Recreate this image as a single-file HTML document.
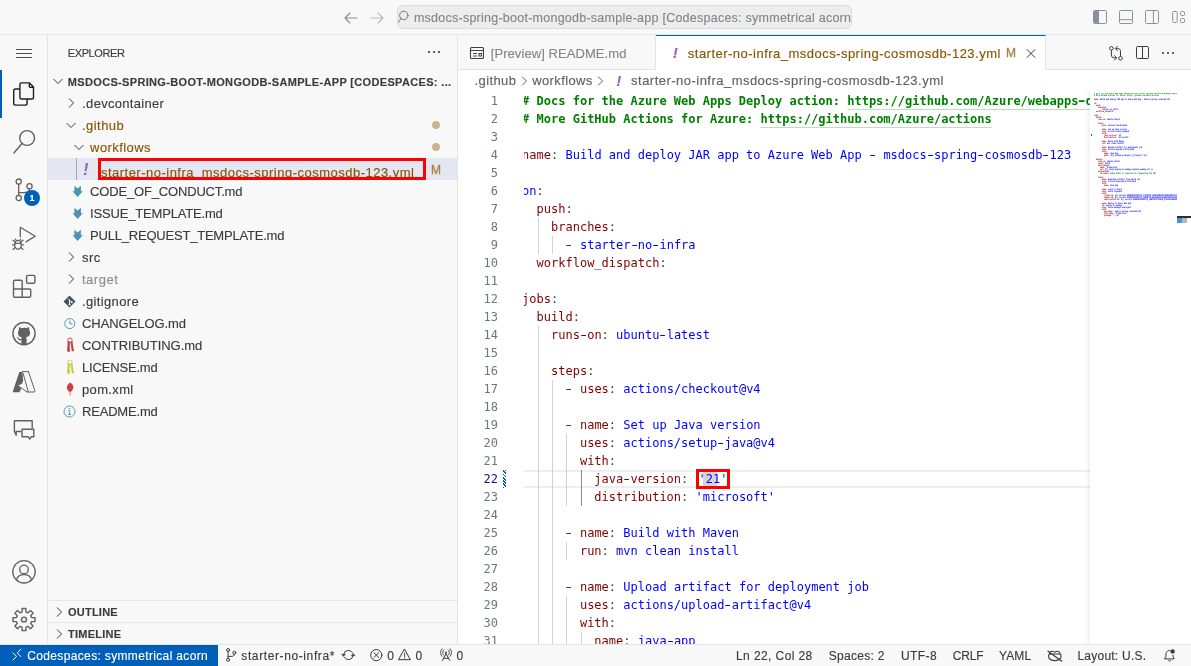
<!DOCTYPE html>
<html lang="en"><head><meta charset="utf-8"><title>starter-no-infra_msdocs-spring-cosmosdb-123.yml</title>
<style>
*{box-sizing:border-box;margin:0;padding:0}
html,body{width:1191px;height:666px;overflow:hidden;background:#f8f8f8}
body{position:relative;font-family:"Liberation Sans",sans-serif;font-size:13px;color:#3b3b3b;-webkit-text-stroke:.14px currentColor}
.abs{position:absolute}
svg{display:block;position:absolute;overflow:visible}
.t{position:absolute;white-space:nowrap;line-height:22px;height:22px}
/* title bar */
#title{position:absolute;left:0;top:0;width:1191px;height:35px;background:#f8f8f8;border-bottom:1px solid #e5e5e5}
#cc{position:absolute;left:397px;top:5px;width:455px;height:24px;background:#ededed;border:1px solid #dcdcdc;border-radius:6px;overflow:hidden}
#cc .t{left:17px;top:1.500px;line-height:21px;height:21px;color:#7f8790;font-size:12.5px}#cctext{display:inline-block}
/* activity bar */
#act{position:absolute;left:0;top:35px;width:48px;height:609px;background:#f8f8f8;border-right:1px solid #e5e5e5}
/* sidebar */
#side{position:absolute;left:48px;top:35px;width:410px;height:609px;background:#f8f8f8;border-right:1px solid #e5e5e5;overflow:hidden}
.row{position:absolute;left:0;width:409px;height:22px}
.row .t{top:1px}
.mod{color:#895503}
.sec{position:absolute;left:0;width:409px;height:22px;border-top:1px solid #e5e5e5}
.sec .t{font-size:11px;font-weight:bold;left:20px;top:0;line-height:22px;color:#3b3b3b}
/* editor */
#ed{position:absolute;left:458px;top:35px;width:733px;height:609px;background:#fff;overflow:hidden}
#tabs{position:absolute;left:0;top:0;width:733px;height:35px;background:#f8f8f8;border-bottom:1px solid #e5e5e5}
.tab{position:absolute;top:0;height:35px;border-right:1px solid #e5e5e5}
.tab .t{top:0;line-height:35px;height:35px}
#bc{position:absolute;left:0;top:35px;width:733px;height:22px;background:#fff;color:#616161}
#bc .t{top:0}
#code{-webkit-text-stroke:0;position:absolute;left:66px;top:57px;width:566px;height:552px;overflow:hidden;font-family:"DejaVu Sans Mono","Liberation Mono",monospace;font-size:12px}
#code .in{position:absolute;left:-1.9px;top:0}
.ln{position:absolute;left:0;height:18px;line-height:18px;white-space:pre;color:#3b3b3b}
.cm{font-weight:bold}
.u,.u .hy{text-decoration:underline;text-decoration-color:#c2dcc2;text-underline-offset:4.300px;text-decoration-thickness:1.200px}
.rb{border:3px solid #ff0000}.hy{display:inline-block;transform:scaleX(1.550)}
#nums{-webkit-text-stroke:0;position:absolute;left:0;top:57px;width:40px;height:552px;overflow:hidden;font-family:"DejaVu Sans Mono","Liberation Mono",monospace;font-size:12px;color:#6e7681}
.num{position:absolute;right:0;height:18px;line-height:18px;text-align:right;white-space:pre}
.num.act{color:#171184}
.g{position:absolute;width:1px;background:#d3d3d3}
.mm{-webkit-text-stroke:0;position:absolute;left:0;top:0;width:83px;height:140px;overflow:hidden;font-family:"DejaVu Sans Mono","Liberation Mono",monospace;font-size:2.300px;font-weight:bold}
.ml{position:absolute;left:0;height:2px;line-height:2px;white-space:pre;transform:scaleX(.7222);transform-origin:0 0}
/* status */
#status{position:absolute;left:0;top:644px;width:1191px;height:22px;background:#f8f8f8;border-top:1px solid #e5e5e5;font-size:12px;color:#3b3b3b}
#status .t{top:0;line-height:22px;font-size:12px}
#remote{position:absolute;left:0;top:0;width:218px;height:21px;background:#005fb8;color:#fff}
#side,#ed,#title,#status,#act{will-change:transform}</style><style id="fit">#s_explorer{letter-spacing:-0.403px;margin-left:-0.2px}#r0{letter-spacing:0.332px;margin-left:-0.2px}#r1{letter-spacing:0.303px;margin-left:0.2px}#r2{letter-spacing:0.45px;margin-left:0.0px}#r3{letter-spacing:0.425px;margin-left:0.1px}#r4{letter-spacing:0.491px;margin-left:-0.6px}#r5{letter-spacing:-0.172px;margin-left:0.1px}#r6{letter-spacing:-0.181px;margin-left:0.1px}#r7{letter-spacing:-0.211px;margin-left:0.1px}#r8{letter-spacing:0.485px;margin-left:0.0px}#r9{letter-spacing:0.508px;margin-left:0.0px}#r10{letter-spacing:0.352px;margin-left:0.0px}#r11{letter-spacing:-0.062px;margin-left:0.0px}#r12{letter-spacing:-0.022px;margin-left:0.0px}#r13{letter-spacing:-0.171px;margin-left:0.0px}#r14{letter-spacing:0.354px;margin-left:0.0px}#r15{letter-spacing:-0.189px;margin-left:0.0px}#s_outline{letter-spacing:0.231px;margin-left:0.0px}#s_timeline{letter-spacing:0.257px;margin-left:0.0px}#cctext{letter-spacing:0.25px;margin-left:-1.1px}#tab1{letter-spacing:0.075px;margin-left:-0.3px}#tab2{letter-spacing:0.48px;margin-left:-0.2px}#bc1{letter-spacing:0.393px;margin-left:0.5px}#bc2{letter-spacing:0.38px;margin-left:0.2px}#bc3{letter-spacing:0.474px;margin-left:0.1px}#st_remote{letter-spacing:0.347px;margin-left:0.3px}#st_branch{letter-spacing:0.607px;margin-left:-0.7px}#st_ln{letter-spacing:0.408px;margin-left:0.0px}#st_sp{letter-spacing:0.281px;margin-left:0.8px}#st_utf{letter-spacing:0.42px;margin-left:0.0px}#st_crlf{letter-spacing:-0.161px;margin-left:-0.2px}#st_yaml{letter-spacing:0.101px;margin-left:0.0px}#st_layout{letter-spacing:0.238px;margin-left:-0.6px}</style></head><body>

<!-- ================= TITLE BAR ================= -->
<div id="title">
  <svg style="left:343px;top:10px" width="16" height="16" viewBox="0 0 16 16" fill="none" stroke="#8b8b8b" stroke-width="1.1" stroke-linecap="round" stroke-linejoin="round"><path d="M14 8H2.5M7 3L2 8l5 5"/></svg>
  <svg style="left:368.500px;top:10px" width="16" height="16" viewBox="0 0 16 16" fill="none" stroke="#b9b9b9" stroke-width="1.1" stroke-linecap="round" stroke-linejoin="round"><path d="M2 8h11.5M9 3l5 5-5 5"/></svg>
  <div id="cc">
    <svg style="left:-1px;top:3px" width="13" height="14" viewBox="0 0 13 14" fill="none" stroke="#737373" stroke-width="1" stroke-linecap="round"><circle cx="6.800" cy="6.400" r="4.200"/><path d="M3.900 9.500L1.400 13.300"/></svg>
    <div class="t" id="ccwrap"><span id="cctext">msdocs-spring-boot-mongodb-sample-app [Codespaces: symmetrical acorn</span><span>]</span></div>
  </div>
  <!-- layout controls -->
  <svg style="left:1093px;top:10px" width="14" height="14" viewBox="0 0 14 14" fill="none" stroke="#8791a0" stroke-width="1"><rect x=".5" y=".5" width="13" height="13" rx="1.200"/><path d="M1 1.500a.5 .5 0 0 1 .5-.5H6v12H1.500a.5 .5 0 0 1-.5-.5z" fill="#8791a0" stroke="none"/></svg>
  <svg style="left:1119px;top:10px" width="14" height="14" viewBox="0 0 14 14" fill="none" stroke="#8791a0" stroke-width="1"><rect x=".5" y=".5" width="13" height="13" rx="1.200"/><path d="M.5 9.700h13"/></svg>
  <svg style="left:1145px;top:10px" width="14" height="14" viewBox="0 0 14 14" fill="none" stroke="#8791a0" stroke-width="1"><rect x=".5" y=".5" width="13" height="13" rx="1.200"/><path d="M8.400 .5v13"/></svg>
  <svg style="left:1172px;top:10px" width="14" height="14" viewBox="0 0 14 14" fill="none" stroke="#8791a0" stroke-width="1"><rect x=".7" y="1.500" width="4.500" height="11" rx="1"/><rect x="8.500" y="1.500" width="4" height="4" rx="1"/><rect x="8.500" y="8.500" width="4" height="4" rx="1"/></svg>
</div>

<!-- ================= ACTIVITY BAR ================= -->
<div id="act">
  <!-- menu -->
  <svg style="left:16px;top:10px" width="16" height="16" viewBox="0 0 16 16" stroke="#4f4f4f" stroke-width="1"><path d="M0 4.500h16M0 8.500h16M0 12.500h16"/></svg>
  <div class="abs" style="left:0;top:35px;width:2px;height:48px;background:#005fb8"></div>
  <!-- files -->
  <svg style="left:12px;top:47px" width="24" height="24" viewBox="0 0 24 24" fill="none" stroke="#1f1f1f" stroke-width="1.400" stroke-linejoin="round"><rect x="1.700" y="7" width="13.400" height="16.100" rx="1.800"/><path fill="#f8f8f8" d="M9.400 .900h8.100l4 4.200V15.500a1.500 1.500 0 0 1-1.500 1.500H9.400a1.500 1.500 0 0 1-1.500-1.500V2.400a1.500 1.500 0 0 1 1.500-1.500z"/><path d="M17.300 1.200v3a1 1 0 0 0 1 1h2.900"/></svg>
  <!-- search -->
  <svg style="left:12px;top:95px" width="24" height="24" viewBox="0 0 24 24" fill="none" stroke="#616161" stroke-width="1.400" stroke-linecap="round"><circle cx="15.100" cy="8" r="7.400"/><path d="M10 13.500L1.900 23"/></svg>
  <!-- scm -->
  <svg style="left:12px;top:143px" width="24" height="24" viewBox="0 0 24 24" fill="none" stroke="#616161" stroke-width="1.300"><circle cx="6.700" cy="3.600" r="2.600"/><circle cx="6.700" cy="20" r="2.600"/><circle cx="17.500" cy="8.200" r="2.600"/><path d="M6.700 6.200v11.200M17.500 10.800c0 3.500-2.500 3.900-6 3.900H6.700"/></svg>
  <div class="abs" style="left:24px;top:155px;width:16px;height:16px;border-radius:8px;background:#005fb8;color:#fff;font-size:9px;font-weight:bold;text-align:center;line-height:16px">1</div>
  <!-- debug -->
  <svg style="left:12px;top:191px" width="24" height="24" viewBox="0 0 24 24" fill="none" stroke="#616161" stroke-width="1.300" stroke-linejoin="round" stroke-linecap="round"><path d="M8.300 10.800V1.300L23.200 10.300l-9.200 5.600"/><ellipse cx="6" cy="18.800" rx="3.300" ry="4.400"/><path d="M2.700 18.800H.500M9.300 18.800h2.200M3.200 16L1 14.300M8.800 16l2.200-1.700M3.200 21.600L1 23.400M8.800 21.600l2.200 1.800M3 17.300h6M4.300 14.800L3.500 13.300M7.700 14.800l.8-1.500"/></svg>
  <!-- extensions -->
  <svg style="left:12px;top:239px" width="24" height="24" viewBox="0 0 24 24" fill="none" stroke="#616161" stroke-width="1.400" stroke-linejoin="round"><path d="M2.700 6.300h6.300a1.200 1.200 0 0 1 1.200 1.200V15h7.300a1.200 1.200 0 0 1 1.200 1.200V22a1.200 1.200 0 0 1-1.200 1.200H2.700A1.200 1.200 0 0 1 1.500 22V7.500a1.200 1.200 0 0 1 1.200-1.200zM1.500 15h8.700M10.200 15v8.200"/><rect x="14.600" y="1.400" width="8.300" height="7.800" rx="1.200"/></svg>
  <!-- github -->
  <svg style="left:12px;top:287px" width="24" height="24" viewBox="0 0 24 24"><circle cx="12" cy="11.600" r="11.100" fill="none" stroke="#616161" stroke-width="1.400"/><path fill="#616161" d="M12 5.900c-.8 0-1.600.1-2.300.3-1.300-.9-2.200-1-2.600-.9-.4 1-.2 1.900 0 2.400-.7.800-1.100 1.800-1.100 3 0 3.300 2 4.300 4 4.700-.3.300-.5.700-.6 1.300-.6.300-2 .6-2.800-.8 0 0-.5-.9-1.500-1 0 0-.9 0-.1.600 0 0 .6.300 1.100 1.400 0 0 .6 1.900 3.300 1.300v3.600c.8.300 1.700.4 2.600.4s1.800-.1 2.600-.4v-4.900c0-.8-.3-1.300-.6-1.600 2.100-.3 4.100-1.200 4.100-4.700 0-1.200-.4-2.100-1.100-2.900.2-.5.500-1.500-.1-2.500-.4-.1-1.300 0-2.600.9-.7-.2-1.500-.3-2.300-.3z"/></svg>
  <!-- azure -->
  <svg style="left:12px;top:335px" width="24" height="24" viewBox="0 0 24 24"><path d="M7.300 2H10.400L11.200 10.400 9.900 14 5.900 15.500 9.200 18.400 7.500 22.200H1.400Q.600 22.200 .900 21.200Z" fill="#616161"/><path d="M10 1.600H16.200M16.400 1.600L22.900 20.800Q23.200 22 22 22H15M11 3L16.200 21.500M5.900 15.500L14.800 21.800" fill="none" stroke="#616161" stroke-width="1" stroke-linecap="round"/></svg>
  <!-- chat -->
  <svg style="left:12px;top:383px" width="24" height="24" viewBox="0 0 24 24" fill="none" stroke="#616161" stroke-width="1.400" stroke-linejoin="round"><path d="M9.300 13.500H4.200v3.800L2.400 13.500V2.700h17.800v7.900"/><path d="M10 11.300h11.800v7.400h-2.500l-1.600 2.300-1.700-2.300H10z"/></svg>
  <!-- account -->
  <svg style="left:12px;top:525px" width="24" height="24" viewBox="0 0 24 24" fill="none" stroke="#616161" stroke-width="1.300"><circle cx="12" cy="11.800" r="11.200"/><circle cx="12" cy="9.400" r="4.300"/><path d="M4.600 20c.6-3.300 3.700-5.300 7.400-5.300s6.800 2 7.400 5.300"/></svg>
  <!-- gear -->
  <svg style="left:12px;top:573px" width="24" height="24" viewBox="0 0 24 24" fill="none" stroke="#616161" stroke-width="1.400" stroke-linejoin="round"><circle cx="12" cy="11.600" r="2.500"/><path d="M9.990 4.060 L10.110 0.560 L13.890 0.560 L14.010 4.060 L15.910 4.850 L18.470 2.450 L21.150 5.130 L18.750 7.690 L19.540 9.590 L23.040 9.710 L23.040 13.490 L19.540 13.610 L18.750 15.510 L21.150 18.070 L18.470 20.750 L15.910 18.350 L14.010 19.140 L13.890 22.640 L10.110 22.640 L9.990 19.140 L8.090 18.350 L5.530 20.750 L2.850 18.070 L5.250 15.510 L4.460 13.610 L0.960 13.490 L0.960 9.710 L4.460 9.590 L5.250 7.690 L2.850 5.130 L5.530 2.450 L8.090 4.850Z"/></svg>
</div>

<!-- ================= SIDEBAR ================= -->
<div id="side">
  <div class="t" style="left:20px;top:7px;font-size:11px;color:#3b3b3b" id="s_explorer">EXPLORER</div>
  <svg style="left:378px;top:9px" width="16" height="16" viewBox="0 0 16 16" fill="#3b3b3b"><circle cx="3" cy="8" r="1.100"/><circle cx="8" cy="8" r="1.100"/><circle cx="13" cy="8" r="1.100"/></svg>
<div class="row" style="top:35px;"><svg style="left:2px;top:3px" width="16" height="16" viewBox="0 0 16 16" fill="none" stroke="#3b3b3b" stroke-width="1"><path d="M3.500 6l4.500 4.500L12.500 6"/></svg><div class="t" id="r0" style="left:20px;font-size:11px;font-weight:bold;color:#3b3b3b">MSDOCS-SPRING-BOOT-MONGODB-SAMPLE-APP [CODESPACES: ...</div></div>
<div class="row" style="top:57px;"><svg style="left:15px;top:3px" width="16" height="16" viewBox="0 0 16 16" fill="none" stroke="#3b3b3b" stroke-width="1"><path d="M6 3.500l4.500 4.500L6 12.500"/></svg><div class="t" id="r1" style="left:34px">.devcontainer</div></div>
<div class="row" style="top:79px;"><svg style="left:15px;top:3px" width="16" height="16" viewBox="0 0 16 16" fill="none" stroke="#3b3b3b" stroke-width="1"><path d="M3.500 6l4.500 4.500L12.500 6"/></svg><div class="t mod" id="r2" style="left:34px">.github</div><div class="abs" style="left:384px;top:7px;width:8px;height:8px;border-radius:4px;background:#c9b48e"></div></div>
<div class="row" style="top:101px;"><svg style="left:23px;top:3px" width="16" height="16" viewBox="0 0 16 16" fill="none" stroke="#3b3b3b" stroke-width="1"><path d="M3.500 6l4.500 4.500L12.500 6"/></svg><div class="t mod" id="r3" style="left:42px">workflows</div><div class="abs" style="left:384px;top:7px;width:8px;height:8px;border-radius:4px;background:#c9b48e"></div></div>
<div class="row" style="top:123px;background:#e4e6f1"><div class="abs" style="left:28px;top:0;width:1px;height:22px;background:#a9a9a9"></div><div class="t" style="left:35.300px;top:1px;color:#9866c2;font-style:italic;font-size:15.600px;font-weight:bold">!</div><div class="abs" style="left:50px;top:0;width:328px;height:22px;border:3px solid #ff0000;overflow:hidden"><div class="t mod" id="r4" style="left:0.500px;top:1px">starter-no-infra_msdocs-spring-cosmosdb-123.yml</div></div><div class="t" id="r4m" style="left:383px;color:#a98547;font-size:12px;-webkit-text-stroke:.35px currentColor">M</div></div>
<div class="row" style="top:145px;"><svg style="left:0;top:0" width="48" height="22" viewBox="0 0 48 22" fill="#4f93b3"><path d="M26.400 5.800L29.500 8.500 32.900 5.800V11.200H34.800L29.600 16.900 24.500 11.200H26.400Z"/></svg><div class="t" id="r5" style="left:42px">CODE_OF_CONDUCT.md</div></div>
<div class="row" style="top:167px;"><svg style="left:0;top:0" width="48" height="22" viewBox="0 0 48 22" fill="#4f93b3"><path d="M26.400 5.800L29.500 8.500 32.900 5.800V11.200H34.800L29.600 16.900 24.500 11.200H26.400Z"/></svg><div class="t" id="r6" style="left:42px">ISSUE_TEMPLATE.md</div></div>
<div class="row" style="top:189px;"><svg style="left:0;top:0" width="48" height="22" viewBox="0 0 48 22" fill="#4f93b3"><path d="M26.400 5.800L29.500 8.500 32.900 5.800V11.200H34.800L29.600 16.900 24.500 11.200H26.400Z"/></svg><div class="t" id="r7" style="left:42px">PULL_REQUEST_TEMPLATE.md</div></div>
<div class="row" style="top:211px;"><svg style="left:15px;top:3px" width="16" height="16" viewBox="0 0 16 16" fill="none" stroke="#3b3b3b" stroke-width="1"><path d="M6 3.500l4.500 4.500L6 12.500"/></svg><div class="t" id="r8" style="left:34px">src</div></div>
<div class="row" style="top:233px;"><svg style="left:15px;top:3px" width="16" height="16" viewBox="0 0 16 16" fill="none" stroke="#3b3b3b" stroke-width="1"><path d="M6 3.500l4.500 4.500L6 12.500"/></svg><div class="t" id="r9" style="left:34px;color:#8e8e90">target</div></div>
<div class="row" style="top:255px;"><svg style="left:15px;top:5px" width="13" height="13" viewBox="0 0 13 13"><path d="M6.500 .500L12.500 6.500 6.500 12.500 .500 6.500z" fill="#41535b"/><path d="M5 3.500l3.500 3.500M6.500 5v5" stroke="#f8f8f8" stroke-width="1" fill="none"/><circle cx="6.500" cy="9.500" r="1" fill="#f8f8f8"/><circle cx="8.800" cy="7.200" r="1" fill="#f8f8f8"/></svg><div class="t" id="r10" style="left:34px">.gitignore</div></div>
<div class="row" style="top:277px;"><svg style="left:15px;top:5px" width="13" height="13" viewBox="0 0 13 13" fill="none" stroke="#519aba" stroke-width="1"><circle cx="6.800" cy="6.600" r="5"/><path d="M6.800 3.800v3h2.600"/></svg><div class="t" id="r11" style="left:34px">CHANGELOG.md</div></div>
<div class="row" style="top:299px;"><svg style="left:0;top:0" width="48" height="22" viewBox="0 0 48 22" fill="#cc3e44"><circle cx="21.900" cy="6.300" r="2.300" fill="none" stroke="#cc3e44" stroke-width=".900"/><path d="M19.700 7.300L22.100 7.600 21.700 12.500 22 17.400 20.400 18 19.100 17 19.400 12zM22.500 7.800L24.500 7.300 25.100 12 26 16.500 25.200 17.600 23.700 17 23.100 12z"/></svg><div class="t" id="r12" style="left:34px">CONTRIBUTING.md</div></div>
<div class="row" style="top:321px;"><svg style="left:0;top:0" width="48" height="22" viewBox="0 0 48 22" fill="#cbcb41"><circle cx="21.900" cy="6.300" r="2.300" fill="none" stroke="#cbcb41" stroke-width=".900"/><path d="M19.700 7.300L22.100 7.600 21.700 12.500 22 17.400 20.400 18 19.100 17 19.400 12zM22.500 7.800L24.500 7.300 25.100 12 26 16.500 25.200 17.600 23.700 17 23.100 12z"/></svg><div class="t" id="r13" style="left:34px">LICENSE.md</div></div>
<div class="row" style="top:343px;"><svg style="left:0;top:0" width="48" height="22" viewBox="0 0 48 22" fill="#cc3e44"><path d="M22.300 4.500C24.500 6 25.600 7.800 25.400 9.500 25.200 11.500 23.800 13.200 22.400 14L22.500 17.200H21.800L21.700 14C20 13 18.800 11.300 18.900 9.300 19 7.600 20.300 5.800 22.300 4.500z"/></svg><div class="t" id="r14" style="left:34px">pom.xml</div></div>
<div class="row" style="top:365px;"><svg style="left:15px;top:5px" width="13" height="13" viewBox="0 0 13 13" fill="none" stroke="#519aba" stroke-width="1"><circle cx="6.500" cy="6.500" r="5.500"/><path d="M5.300 5.500h1.400v4M5 9.500h3" /><circle cx="6.400" cy="3.600" r=".700" fill="#519aba" stroke="none"/></svg><div class="t" id="r15" style="left:34px">README.md</div></div>
  <div class="sec" style="top:565px"><svg style="left:2.500px;top:3px" width="16" height="16" viewBox="0 0 16 16" fill="none" stroke="#3b3b3b" stroke-width="1"><path d="M6 3.500l4.500 4.500L6 12.500"/></svg><div class="t" id="s_outline">OUTLINE</div></div>
  <div class="sec" style="top:587px"><svg style="left:2.500px;top:3px" width="16" height="16" viewBox="0 0 16 16" fill="none" stroke="#3b3b3b" stroke-width="1"><path d="M6 3.500l4.500 4.500L6 12.500"/></svg><div class="t" id="s_timeline">TIMELINE</div></div>
</div>

<!-- ================= EDITOR ================= -->
<div id="ed">
  <div id="tabs">
    <div class="tab" style="left:0;width:198px">
      <svg style="left:10.500px;top:10px" width="16" height="16" viewBox="0 0 16 16" fill="none" stroke="#424242" stroke-width="1.100"><rect x="1.500" y="2.500" width="13" height="11" rx="1"/><path d="M1.500 5.500h13M4 8.500h4M4 11h4M10 8.500h2.500v2.500H10z"/></svg>
      <div class="t" style="left:33px;top:1px;color:#868686" id="tab1">[Preview] README.md</div>
    </div>
    <div class="tab" style="left:198px;width:390px;background:#fff;border-top:1px solid #005fb8;height:36px">
      <div class="t" id="x_tab" style="left:16.800px;top:-1px;line-height:35px;color:#9866c2;font-style:italic;font-size:15.200px;font-weight:bold">!</div>
      <div class="t mod" style="left:32px;top:0" id="tab2">starter-no-infra_msdocs-spring-cosmosdb-123.yml</div>
      <div class="t" style="left:350px;top:0;color:#a98547;font-size:12px;-webkit-text-stroke:.35px currentColor" id="tabM">M</div>
      <svg style="left:366px;top:9px" width="16" height="16" viewBox="0 0 16 16" fill="none" stroke="#3b3b3b" stroke-width="1"><path d="M4.800 4.300l8.400 8.400M13.200 4.300l-8.400 8.400"/></svg>
    </div>
    <!-- editor actions -->
    <svg style="left:650px;top:10px" width="16" height="16" viewBox="0 0 16 16" fill="none" stroke="#3b3b3b" stroke-width="1"><circle cx="3.400" cy="3.300" r="1.800"/><circle cx="12.500" cy="13.300" r="1.800"/><path d="M3.400 5.100v4.900c0 1.800 1 2.800 2.800 2.800h2M6.200 10.300l2.500 2.500-2.500 2.500M12.500 11.500V6.300c0-1.800-1-2.800-2.800-2.800h-2M9.800 6l-2.500-2.500L9.800 1"/></svg>
    <svg style="left:677px;top:10px" width="16" height="16" viewBox="0 0 16 16" fill="none" stroke="#3b3b3b" stroke-width="1"><rect x="1.500" y="1.500" width="12" height="12" rx="1.200"/><path d="M7.500 1.500v12"/></svg>
    <svg style="left:702px;top:10px" width="16" height="16" viewBox="0 0 16 16" fill="#3b3b3b"><circle cx="3" cy="8" r="1.100"/><circle cx="8" cy="8" r="1.100"/><circle cx="13" cy="8" r="1.100"/></svg>
  </div>
  <div id="bc">
    <div class="t" style="left:16px" id="bc1">.github</div>
    <svg style="left:58px;top:3px" width="16" height="16" viewBox="0 0 16 16" fill="none" stroke="#616161" stroke-width="1"><path d="M6 3.500l4.500 4.500L6 12.500"/></svg>
    <div class="t" style="left:74px" id="bc2">workflows</div>
    <svg style="left:134px;top:3px" width="16" height="16" viewBox="0 0 16 16" fill="none" stroke="#616161" stroke-width="1"><path d="M6 3.500l4.500 4.500L6 12.500"/></svg>
    <div class="t" id="x_bc" style="left:158.300px;top:0;color:#9866c2;font-style:italic;font-size:15.200px;font-weight:bold">!</div>
    <div class="t" style="left:173px" id="bc3">starter-no-infra_msdocs-spring-cosmosdb-123.yml</div>
  </div>
  <!-- line highlight -->
  <div class="abs" style="left:66px;top:435px;width:566px;height:18px;border-top:2px solid #eeeeee;border-bottom:2px solid #eeeeee"></div>
  <div id="nums">
<div class="num" style="top:0px">1</div>
<div class="num" style="top:18px">2</div>
<div class="num" style="top:36px">3</div>
<div class="num" style="top:54px">4</div>
<div class="num" style="top:72px">5</div>
<div class="num" style="top:90px">6</div>
<div class="num" style="top:108px">7</div>
<div class="num" style="top:126px">8</div>
<div class="num" style="top:144px">9</div>
<div class="num" style="top:162px">10</div>
<div class="num" style="top:180px">11</div>
<div class="num" style="top:198px">12</div>
<div class="num" style="top:216px">13</div>
<div class="num" style="top:234px">14</div>
<div class="num" style="top:252px">15</div>
<div class="num" style="top:270px">16</div>
<div class="num" style="top:288px">17</div>
<div class="num" style="top:306px">18</div>
<div class="num" style="top:324px">19</div>
<div class="num" style="top:342px">20</div>
<div class="num" style="top:360px">21</div>
<div class="num act" style="top:378px">22</div>
<div class="num" style="top:396px">23</div>
<div class="num" style="top:414px">24</div>
<div class="num" style="top:432px">25</div>
<div class="num" style="top:450px">26</div>
<div class="num" style="top:468px">27</div>
<div class="num" style="top:486px">28</div>
<div class="num" style="top:504px">29</div>
<div class="num" style="top:522px">30</div>
<div class="num" style="top:540px">31</div>
<div class="num" style="top:558px">32</div>
  </div>
  <!-- dirty diff -->
  <div class="abs" style="left:45px;top:435px;width:3px;height:18px;background:repeating-linear-gradient(45deg,#005fb8 0,#005fb8 1.400px,#fff 1.400px,#fff 2.300px)"></div>
  <div id="code"><div class="in">
<div class="g" style="left:15.45px;top:126px;height:36px;"></div>
<div class="g" style="left:29.90px;top:144px;height:18px;"></div>
<div class="g" style="left:15.45px;top:234px;height:360px;"></div>
<div class="g" style="left:29.90px;top:288px;height:306px;"></div>
<div class="g" style="left:44.34px;top:342px;height:72px;"></div>
<div class="g" style="left:58.79px;top:378px;height:36px;background:#8a8a8a"></div>
<div class="g" style="left:44.34px;top:450px;height:18px;"></div>
<div class="g" style="left:44.34px;top:504px;height:90px;"></div>
<div class="g" style="left:58.79px;top:540px;height:54px;"></div>
<div class="abs" style="left:180.60px;top:378px;width:14.45px;height:18px;background:#d4d4d4"></div>
<div class="ln" style="top:0px"><span class="cm" style="color:#008000"># Docs for the Azure Web Apps Deploy action: </span><span class="cm u" style="color:#008000">https://github.com/Azure/webapps<span class="hy">-</span>deploy</span></div>
<div class="ln" style="top:18px"><span class="cm" style="color:#008000"># More GitHub Actions for Azure: </span><span class="cm u" style="color:#008000">https://github.com/Azure/actions</span></div>
<div class="ln" style="top:36px"></div>
<div class="ln" style="top:54px"><span style="color:#800000">name</span><span style="color:#3b3b3b">:</span> <span style="color:#0000ff">Build and deploy JAR app to Azure Web App <span class="hy">-</span> msdocs<span class="hy">-</span>spring<span class="hy">-</span>cosmosdb<span class="hy">-</span>123</span></div>
<div class="ln" style="top:72px"></div>
<div class="ln" style="top:90px"><span style="color:#0000ff">on</span><span style="color:#3b3b3b">:</span></div>
<div class="ln" style="top:108px">  <span style="color:#800000">push</span><span style="color:#3b3b3b">:</span></div>
<div class="ln" style="top:126px">    <span style="color:#800000">branches</span><span style="color:#3b3b3b">:</span></div>
<div class="ln" style="top:144px">      <span style="color:#3b3b3b"><span class="hy">-</span> </span><span style="color:#0000ff">starter<span class="hy">-</span>no<span class="hy">-</span>infra</span></div>
<div class="ln" style="top:162px">  <span style="color:#800000">workflow_dispatch</span><span style="color:#3b3b3b">:</span></div>
<div class="ln" style="top:180px"></div>
<div class="ln" style="top:198px"><span style="color:#800000">jobs</span><span style="color:#3b3b3b">:</span></div>
<div class="ln" style="top:216px">  <span style="color:#800000">build</span><span style="color:#3b3b3b">:</span></div>
<div class="ln" style="top:234px">    <span style="color:#800000">runs<span class="hy">-</span>on</span><span style="color:#3b3b3b">:</span> <span style="color:#0000ff">ubuntu<span class="hy">-</span>latest</span></div>
<div class="ln" style="top:252px"></div>
<div class="ln" style="top:270px">    <span style="color:#800000">steps</span><span style="color:#3b3b3b">:</span></div>
<div class="ln" style="top:288px">      <span style="color:#3b3b3b"><span class="hy">-</span> </span><span style="color:#800000">uses</span><span style="color:#3b3b3b">:</span> <span style="color:#0000ff">actions/checkout@v4</span></div>
<div class="ln" style="top:306px"></div>
<div class="ln" style="top:324px">      <span style="color:#3b3b3b"><span class="hy">-</span> </span><span style="color:#800000">name</span><span style="color:#3b3b3b">:</span> <span style="color:#0000ff">Set up Java version</span></div>
<div class="ln" style="top:342px">        <span style="color:#800000">uses</span><span style="color:#3b3b3b">:</span> <span style="color:#0000ff">actions/setup<span class="hy">-</span>java@v4</span></div>
<div class="ln" style="top:360px">        <span style="color:#800000">with</span><span style="color:#3b3b3b">:</span></div>
<div class="ln" style="top:378px">          <span style="color:#800000">java<span class="hy">-</span>version</span><span style="color:#3b3b3b">:</span> <span style="color:#0000ff"><span class="rb">'21'</span></span></div>
<div class="ln" style="top:396px">          <span style="color:#800000">distribution</span><span style="color:#3b3b3b">:</span> <span style="color:#0000ff">&#x27;microsoft&#x27;</span></div>
<div class="ln" style="top:414px"></div>
<div class="ln" style="top:432px">      <span style="color:#3b3b3b"><span class="hy">-</span> </span><span style="color:#800000">name</span><span style="color:#3b3b3b">:</span> <span style="color:#0000ff">Build with Maven</span></div>
<div class="ln" style="top:450px">        <span style="color:#800000">run</span><span style="color:#3b3b3b">:</span> <span style="color:#0000ff">mvn clean install</span></div>
<div class="ln" style="top:468px"></div>
<div class="ln" style="top:486px">      <span style="color:#3b3b3b"><span class="hy">-</span> </span><span style="color:#800000">name</span><span style="color:#3b3b3b">:</span> <span style="color:#0000ff">Upload artifact for deployment job</span></div>
<div class="ln" style="top:504px">        <span style="color:#800000">uses</span><span style="color:#3b3b3b">:</span> <span style="color:#0000ff">actions/upload<span class="hy">-</span>artifact@v4</span></div>
<div class="ln" style="top:522px">        <span style="color:#800000">with</span><span style="color:#3b3b3b">:</span></div>
<div class="ln" style="top:540px">          <span style="color:#800000">name</span><span style="color:#3b3b3b">:</span> <span style="color:#0000ff">java<span class="hy">-</span>app</span></div>
<div class="ln" style="top:558px">          <span style="color:#800000">path</span><span style="color:#3b3b3b">:</span> <span style="color:#0000ff">&#x27;${{ github.workspace }}/target/*.jar&#x27;</span></div>
  </div></div>
  <!-- minimap -->
  <div class="abs" style="left:627px;top:57px;width:6px;height:552px;background:linear-gradient(to right,rgba(0,0,0,0),rgba(0,0,0,.07))"></div>
  <div class="abs" style="left:632px;top:57px;width:101px;height:552px;background:#fff">
    <div class="abs" style="left:1px;top:42px;width:1.200px;height:2px;background:#005fb8"></div>
    <div style="position:absolute;left:4px;top:.6px"><div class="mm"><div class="ml" style="top:0px"><span style="color:#008000"># Docs for the Azure Web Apps Deploy action: </span><span style="color:#008000">https://github.com/Azure/webapps-deploy</span></div><div class="ml" style="top:2px"><span style="color:#008000"># More GitHub Actions for Azure: </span><span style="color:#008000">https://github.com/Azure/actions</span></div><div class="ml" style="top:4px"></div><div class="ml" style="top:6px"><span style="color:#800000">name</span><span style="color:#3b3b3b">:</span> <span style="color:#0000ff">Build and deploy JAR app to Azure Web App - msdocs-spring-cosmosdb-123</span></div><div class="ml" style="top:8px"></div><div class="ml" style="top:10px"><span style="color:#0000ff">on</span><span style="color:#3b3b3b">:</span></div><div class="ml" style="top:12px">  <span style="color:#800000">push</span><span style="color:#3b3b3b">:</span></div><div class="ml" style="top:14px">    <span style="color:#800000">branches</span><span style="color:#3b3b3b">:</span></div><div class="ml" style="top:16px">      <span style="color:#3b3b3b">- </span><span style="color:#0000ff">starter-no-infra</span></div><div class="ml" style="top:18px">  <span style="color:#800000">workflow_dispatch</span><span style="color:#3b3b3b">:</span></div><div class="ml" style="top:20px"></div><div class="ml" style="top:22px"><span style="color:#800000">jobs</span><span style="color:#3b3b3b">:</span></div><div class="ml" style="top:24px">  <span style="color:#800000">build</span><span style="color:#3b3b3b">:</span></div><div class="ml" style="top:26px">    <span style="color:#800000">runs-on</span><span style="color:#3b3b3b">:</span> <span style="color:#0000ff">ubuntu-latest</span></div><div class="ml" style="top:28px"></div><div class="ml" style="top:30px">    <span style="color:#800000">steps</span><span style="color:#3b3b3b">:</span></div><div class="ml" style="top:32px">      <span style="color:#3b3b3b">- </span><span style="color:#800000">uses</span><span style="color:#3b3b3b">:</span> <span style="color:#0000ff">actions/checkout@v4</span></div><div class="ml" style="top:34px"></div><div class="ml" style="top:36px">      <span style="color:#3b3b3b">- </span><span style="color:#800000">name</span><span style="color:#3b3b3b">:</span> <span style="color:#0000ff">Set up Java version</span></div><div class="ml" style="top:38px">        <span style="color:#800000">uses</span><span style="color:#3b3b3b">:</span> <span style="color:#0000ff">actions/setup-java@v4</span></div><div class="ml" style="top:40px">        <span style="color:#800000">with</span><span style="color:#3b3b3b">:</span></div><div class="ml" style="top:42px">          <span style="color:#800000">java-version</span><span style="color:#3b3b3b">:</span> <span style="color:#0000ff">&#x27;21&#x27;</span></div><div class="ml" style="top:44px">          <span style="color:#800000">distribution</span><span style="color:#3b3b3b">:</span> <span style="color:#0000ff">&#x27;microsoft&#x27;</span></div><div class="ml" style="top:46px"></div><div class="ml" style="top:48px">      <span style="color:#3b3b3b">- </span><span style="color:#800000">name</span><span style="color:#3b3b3b">:</span> <span style="color:#0000ff">Build with Maven</span></div><div class="ml" style="top:50px">        <span style="color:#800000">run</span><span style="color:#3b3b3b">:</span> <span style="color:#0000ff">mvn clean install</span></div><div class="ml" style="top:52px"></div><div class="ml" style="top:54px">      <span style="color:#3b3b3b">- </span><span style="color:#800000">name</span><span style="color:#3b3b3b">:</span> <span style="color:#0000ff">Upload artifact for deployment job</span></div><div class="ml" style="top:56px">        <span style="color:#800000">uses</span><span style="color:#3b3b3b">:</span> <span style="color:#0000ff">actions/upload-artifact@v4</span></div><div class="ml" style="top:58px">        <span style="color:#800000">with</span><span style="color:#3b3b3b">:</span></div><div class="ml" style="top:60px">          <span style="color:#800000">name</span><span style="color:#3b3b3b">:</span> <span style="color:#0000ff">java-app</span></div><div class="ml" style="top:62px">          <span style="color:#800000">path</span><span style="color:#3b3b3b">:</span> <span style="color:#0000ff">&#x27;${{ github.workspace }}/target/*.jar&#x27;</span></div><div class="ml" style="top:64px"></div><div class="ml" style="top:66px">  <span style="color:#800000">deploy</span><span style="color:#3b3b3b">:</span></div><div class="ml" style="top:68px">    <span style="color:#800000">runs-on</span><span style="color:#3b3b3b">:</span> <span style="color:#0000ff">ubuntu-latest</span></div><div class="ml" style="top:70px">    <span style="color:#800000">needs</span><span style="color:#3b3b3b">:</span> <span style="color:#0000ff">build</span></div><div class="ml" style="top:72px">    <span style="color:#800000">environment</span><span style="color:#3b3b3b">:</span></div><div class="ml" style="top:74px">      <span style="color:#800000">name</span><span style="color:#3b3b3b">:</span> <span style="color:#0000ff">&#x27;Production&#x27;</span></div><div class="ml" style="top:76px">      <span style="color:#800000">url</span><span style="color:#3b3b3b">:</span> <span style="color:#0000ff">${{ steps.deploy-to-webapp.outputs.webapp-url }}</span></div><div class="ml" style="top:78px">    <span style="color:#800000">permissions</span><span style="color:#3b3b3b">:</span></div><div class="ml" style="top:80px">      <span style="color:#800000">id-token</span><span style="color:#3b3b3b">:</span> <span style="color:#0000ff">write</span><span style="color:#008000"> #This is required for requesting the JWT</span></div><div class="ml" style="top:82px"></div><div class="ml" style="top:84px">    <span style="color:#800000">steps</span><span style="color:#3b3b3b">:</span></div><div class="ml" style="top:86px">      <span style="color:#3b3b3b">- </span><span style="color:#800000">name</span><span style="color:#3b3b3b">:</span> <span style="color:#0000ff">Download artifact from build job</span></div><div class="ml" style="top:88px">        <span style="color:#800000">uses</span><span style="color:#3b3b3b">:</span> <span style="color:#0000ff">actions/download-artifact@v4</span></div><div class="ml" style="top:90px">        <span style="color:#800000">with</span><span style="color:#3b3b3b">:</span></div><div class="ml" style="top:92px">          <span style="color:#800000">name</span><span style="color:#3b3b3b">:</span> <span style="color:#0000ff">java-app</span></div><div class="ml" style="top:94px"></div><div class="ml" style="top:96px">      <span style="color:#3b3b3b">- </span><span style="color:#800000">name</span><span style="color:#3b3b3b">:</span> <span style="color:#0000ff">Login to Azure</span></div><div class="ml" style="top:98px">        <span style="color:#800000">uses</span><span style="color:#3b3b3b">:</span> <span style="color:#0000ff">azure/login@v2</span></div><div class="ml" style="top:100px">        <span style="color:#800000">with</span><span style="color:#3b3b3b">:</span></div><div class="ml" style="top:102px">          <span style="color:#800000">client-id</span><span style="color:#3b3b3b">:</span> <span style="color:#0000ff">${{ secrets.AZUREAPPSERVICE_CLIENTID_1A2B3C4D5E6F7A8B9C0D1E2F3A4B5C6D }}</span></div><div class="ml" style="top:104px">          <span style="color:#800000">tenant-id</span><span style="color:#3b3b3b">:</span> <span style="color:#0000ff">${{ secrets.AZUREAPPSERVICE_TENANTID_6D5C4B3A2F1E0D9C8B7A6F5E4D3C2B1A }}</span></div><div class="ml" style="top:106px">          <span style="color:#800000">subscription-id</span><span style="color:#3b3b3b">:</span> <span style="color:#0000ff">${{ secrets.AZUREAPPSERVICE_SUBSCRIPTIONID_0F1E2D3C4B5A69788796A5B4 }}</span></div><div class="ml" style="top:108px"></div><div class="ml" style="top:110px">      <span style="color:#3b3b3b">- </span><span style="color:#800000">name</span><span style="color:#3b3b3b">:</span> <span style="color:#0000ff">Deploy to Azure Web App</span></div><div class="ml" style="top:112px">        <span style="color:#800000">id</span><span style="color:#3b3b3b">:</span> <span style="color:#0000ff">deploy-to-webapp</span></div><div class="ml" style="top:114px">        <span style="color:#800000">uses</span><span style="color:#3b3b3b">:</span> <span style="color:#0000ff">azure/webapps-deploy@v3</span></div><div class="ml" style="top:116px">        <span style="color:#800000">with</span><span style="color:#3b3b3b">:</span></div><div class="ml" style="top:118px">          <span style="color:#800000">app-name</span><span style="color:#3b3b3b">:</span> <span style="color:#0000ff">&#x27;msdocs-spring-cosmosdb-123&#x27;</span></div><div class="ml" style="top:120px">          <span style="color:#800000">slot-name</span><span style="color:#3b3b3b">:</span> <span style="color:#0000ff">&#x27;Production&#x27;</span></div><div class="ml" style="top:122px">          <span style="color:#800000">package</span><span style="color:#3b3b3b">:</span> <span style="color:#0000ff">&#x27;*.jar&#x27;</span></div></div></div>
    <div class="abs" style="left:87px;top:126px;width:5px;height:5px;background:#4d94dc"></div>
    <div class="abs" style="left:92px;top:126px;width:5px;height:5px;background:#b7b7b7"></div>
    <div class="abs" style="left:87px;top:124px;width:14px;height:2px;background:#2b2b2b"></div>
  </div>
</div>

<!-- ================= STATUS BAR ================= -->
<div id="status">
  <div id="remote">
    <div class="t" style="left:27px;top:0;color:#fff" id="st_remote">Codespaces: symmetrical acorn</div>
  </div>
  <div class="t" style="left:242px" id="st_branch">starter-no-infra*</div>
  <div class="t" style="left:387.300px">0</div>
  <div class="t" style="left:415.600px">0</div>
  <div class="t" style="left:456.400px">0</div>
  <div class="t" style="left:736px" id="st_ln">Ln 22, Col 28</div>
  <div class="t" style="left:828px" id="st_sp">Spaces: 2</div>
  <div class="t" style="left:901px" id="st_utf">UTF-8</div>
  <div class="t" style="left:953px" id="st_crlf">CRLF</div>
  <div class="t" style="left:999px" id="st_yaml">YAML</div>
  <div class="t" style="left:1078px" id="st_layout">Layout: U.S.</div>
  <!-- icons: coordinates in page px, y relative to 644 -->
  <svg style="left:0;top:-1px" width="1191" height="22" viewBox="0 0 1191 22" fill="none" stroke="#3b3b3b" stroke-width="1" stroke-linecap="round" stroke-linejoin="round">
    <path d="M12.900 8.900L16.600 12.400 13 15.900M20.800 5.200L17.300 8.900 20.800 12.600" stroke="#fff" stroke-width=".950"/>
    <!-- branch -->
    <circle cx="228.100" cy="6" r="1.500"/><circle cx="228.100" cy="15.800" r="1.500"/><circle cx="234.300" cy="8.700" r="1.500"/>
    <path d="M228.100 7.500v6.800M234.300 10.200c0 2.200-1.800 2.200-3.200 2.200H228.100"/>
    <!-- sync -->
    <path d="M343.700 10.300a4.700 4.400 0 0 1 8.800-1.600M353.100 11.700a4.700 4.400 0 0 1-8.800 1.600"/>
    <path d="M341.700 10.200h3.800l-1.900 2.200zM351.300 11.800h3.800l-1.900-2.200z" fill="#3b3b3b" stroke-width=".400"/>
    <!-- error -->
    <circle cx="376.300" cy="11.100" r="5.600"/><path d="M373.900 8.700l4.800 4.800M378.700 8.700l-4.800 4.800"/>
    <!-- warning -->
    <path d="M404.600 5.300L410.400 15.700H398.800z"/><path d="M404.600 9v3.700M404.600 14v.300" stroke-width=".900"/>
    <!-- ports -->
    <path d="M446 9.800L442.400 16.500M446 9.800L449.800 16.500M443.700 14.300h4.800"/><circle cx="446" cy="8.400" r="1" fill="#3b3b3b" stroke="none"/>
    <path d="M443.900 5.800a3.400 3.400 0 0 0 0 5.400M448.200 5.800a3.400 3.400 0 0 1 0 5.400M442 4.800a6 6 0 0 0 0 7.600M450.100 4.800a6 6 0 0 1 0 7.600" stroke-width=".900"/>
    <!-- copilot off -->
    <path d="M1049.500 10.500c0-2.200 1.200-3.300 3-3.300 1.200 0 2 .4 2.300 1.200.300-.8 1.100-1.200 2.300-1.200 1.800 0 3 1.100 3 3.300M1048.700 11v2.600c1.300 2 3.600 3 6.100 3s4.800-1 6.100-3V11c0-.6-.5-1-1.100-1h-10c-.6 0-1.100.4-1.100 1z" stroke-width="1.100"/>
    <path d="M1048 7.200L1061.800 17.200" stroke-width="1.200"/>
    <!-- bell -->
    <path d="M1169.800 6.400a3.500 3.500 0 0 0-3.800 3.500v2.600l-1.600 2.400h9.800l-1.200-2.400v-1.300M1168.300 16.200c.3.600.800.800 1.300.8s1-.2 1.300-.8"/>
    <circle cx="1172.600" cy="7.400" r="2.200" fill="#3b3b3b" stroke="none"/>
  </svg>
</div>
</body></html>
